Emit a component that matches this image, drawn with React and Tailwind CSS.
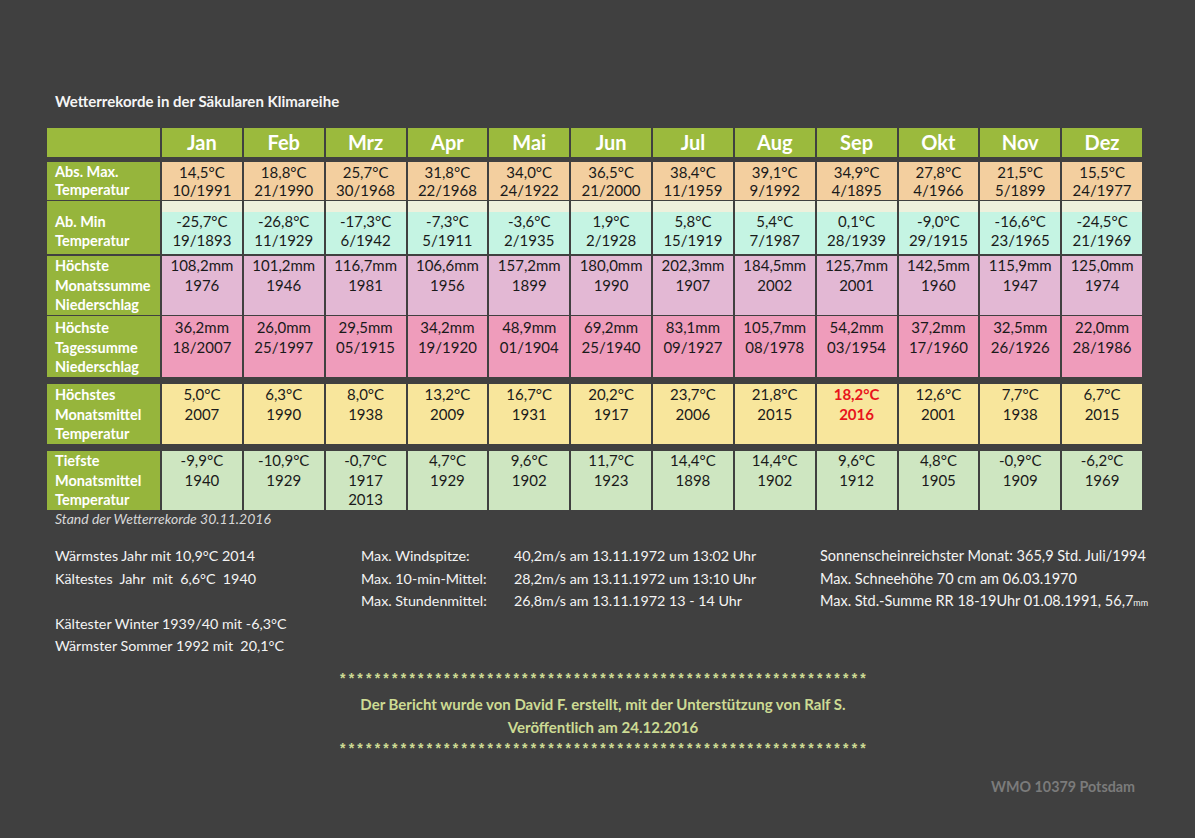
import React from 'react'

const months = ['Jan', 'Feb', 'Mrz', 'Apr', 'Mai', 'Jun', 'Jul', 'Aug', 'Sep', 'Okt', 'Nov', 'Dez']

// Zeilen der Rekordtabelle
const rows = [
  {
    label: ['Abs. Max.', 'Temperatur'],
    bg: 'bg-[#f3cf9f]',
    cls: 'mt-[5px] h-[38px]',
    lead: 'leading-[18px] pt-[1px]',
    cells: [
      ['14,5°C', '10/1991'], ['18,8°C', '21/1990'], ['25,7°C', '30/1968'], ['31,8°C', '22/1968'],
      ['34,0°C', '24/1922'], ['36,5°C', '21/2000'], ['38,4°C', '11/1959'], ['39,1°C', '9/1992'],
      ['34,9°C', '4/1895'], ['27,8°C', '4/1966'], ['21,5°C', '5/1899'], ['15,5°C', '24/1977'],
    ],
  },
  {
    label: ['Ab. Min', 'Temperatur'],
    bg: 'bg-[#c5f4e3]',
    stripe: true,
    cls: 'mt-[1px] h-[53px]',
    lead: 'leading-[19px]',
    cells: [
      ['-25,7°C', '19/1893'], ['-26,8°C', '11/1929'], ['-17,3°C', '6/1942'], ['-7,3°C', '5/1911'],
      ['-3,6°C', '2/1935'], ['1,9°C', '2/1928'], ['5,8°C', '15/1919'], ['5,4°C', '7/1987'],
      ['0,1°C', '28/1939'], ['-9,0°C', '29/1915'], ['-16,6°C', '23/1965'], ['-24,5°C', '21/1969'],
    ],
  },
  {
    label: ['Höchste', 'Monatssumme', 'Niederschlag'],
    bg: 'bg-[#e3b8d4]',
    cls: 'mt-[2px] h-[57px]',
    lead: 'leading-[19.5px]',
    cells: [
      ['108,2mm', '1976'], ['101,2mm', '1946'], ['116,7mm', '1981'], ['106,6mm', '1956'],
      ['157,2mm', '1899'], ['180,0mm', '1990'], ['202,3mm', '1907'], ['184,5mm', '2002'],
      ['125,7mm', '2001'], ['142,5mm', '1960'], ['115,9mm', '1947'], ['125,0mm', '1974'],
    ],
  },
  {
    label: ['Höchste', 'Tagessumme', 'Niederschlag'],
    bg: 'bg-[#ef9cbb]',
    cls: 'mt-[3px] h-[59px]',
    lead: 'leading-[19.5px] pt-[2px]',
    cells: [
      ['36,2mm', '18/2007'], ['26,0mm', '25/1997'], ['29,5mm', '05/1915'], ['34,2mm', '19/1920'],
      ['48,9mm', '01/1904'], ['69,2mm', '25/1940'], ['83,1mm', '09/1927'], ['105,7mm', '08/1978'],
      ['54,2mm', '03/1954'], ['37,2mm', '17/1960'], ['32,5mm', '26/1926'], ['22,0mm', '28/1986'],
    ],
  },
  {
    label: ['Höchstes', 'Monatsmittel', 'Temperatur'],
    bg: 'bg-[#f8e69c]',
    cls: 'mt-[9px] h-[59px]',
    lead: 'leading-[19.5px] pt-[1px]',
    cells: [
      ['5,0°C', '2007'], ['6,3°C', '1990'], ['8,0°C', '1938'], ['13,2°C', '2009'],
      ['16,7°C', '1931'], ['20,2°C', '1917'], ['23,7°C', '2006'], ['21,8°C', '2015'],
      ['18,2°C', '2016'], ['12,6°C', '2001'], ['7,7°C', '1938'], ['6,7°C', '2015'],
    ],
    red: 8,
  },
  {
    label: ['Tiefste', 'Monatsmittel', 'Temperatur'],
    bg: 'bg-[#cee6c1]',
    cls: 'mt-[8px] h-[58px]',
    lead: 'leading-[19.5px]',
    cells: [
      ['-9,9°C', '1940'], ['-10,9°C', '1929'], ['-0,7°C', '1917', '2013'], ['4,7°C', '1929'],
      ['9,6°C', '1902'], ['11,7°C', '1923'], ['14,4°C', '1898'], ['14,4°C', '1902'],
      ['9,6°C', '1912'], ['4,8°C', '1905'], ['-0,9°C', '1909'], ['-6,2°C', '1969'],
    ],
  },
]

const gridCols = 'grid grid-cols-[113px_repeat(12,minmax(0,1fr))] gap-x-[2px]'

function DataRow({ row }) {
  return (
    <div className={`${gridCols} ${row.cls}`}>
      <div
        className={`bg-[#96b53c] pl-[8px] text-[14.5px] font-bold text-white ${row.lead} ${
          row.stripe ? 'pt-[11px]' : ''
        }`}
      >
        {row.label.map((l) => (
          <div key={l}>{l}</div>
        ))}
      </div>
      {row.cells.map((c, i) => (
        <div key={i} className={`flex flex-col ${row.bg}`}>
          {row.stripe && <div className="h-[11px] shrink-0 bg-[#eef0dc]" />}
          <div
            className={`text-center text-[15px] ${row.lead} ${
              row.red === i ? 'font-bold text-[#e8141b]' : 'text-[#1a1a1a]'
            }`}
          >
            {c.map((t, k) => (
              <div key={k}>{t}</div>
            ))}
          </div>
        </div>
      ))}
    </div>
  )
}

function Stars() {
  return (
    <div className="flex justify-between font-['Liberation_Sans',sans-serif] text-[14px] font-bold">
      {Array.from({ length: 61 }).map((_, i) => (
        <span key={i}>*</span>
      ))}
    </div>
  )
}

export default function App() {
  return (
    <div className="w-[1195px] h-[838px] overflow-hidden bg-[#404040] text-white font-['Lato','Open_Sans',sans-serif]">
      <div className="pt-[92px] pl-[55px] text-[15px] font-bold leading-[18px] text-[#f5f5f5]">
        Wetterrekorde in der Säkularen Klimareihe
      </div>

      <div className="ml-[47px] mt-[18px] w-[1095px]">
        <div className={`${gridCols} h-[29px]`}>
          <div className="bg-[#9bba3d]" />
          {months.map((m) => (
            <div
              key={m}
              className="bg-[#9bba3d] text-center text-[20px] font-bold leading-[29px] text-white"
            >
              {m}
            </div>
          ))}
        </div>
        {rows.map((r) => (
          <DataRow key={r.label.join(' ')} row={r} />
        ))}
      </div>

      <div className="pl-[55px] mt-[2px] text-[14px] italic leading-[16px] text-[#d8d8d8]">
        Stand der Wetterrekorde 30.11.2016
      </div>

      <div className="mt-[18px] flex text-[14.3px] leading-[22.5px] text-[#f4f4f4]">
        <div className="w-[361px] pl-[55px] shrink-0">
          <div>Wärmstes Jahr mit 10,9°C 2014</div>
          <div>Kältestes&nbsp; Jahr&nbsp; mit&nbsp; 6,6°C&nbsp; 1940</div>
          <div>&nbsp;</div>
          <div>Kältester Winter 1939/40 mit -6,3°C</div>
          <div>Wärmster Sommer 1992 mit&nbsp; 20,1°C</div>
        </div>
        <div className="w-[459px] shrink-0">
          <div className="flex">
            <div className="w-[153px] shrink-0">Max. Windspitze:</div>
            <div>40,2m/s am 13.11.1972 um 13:02 Uhr</div>
          </div>
          <div className="flex">
            <div className="w-[153px] shrink-0">Max. 10-min-Mittel:</div>
            <div>28,2m/s am 13.11.1972 um 13:10 Uhr</div>
          </div>
          <div className="flex">
            <div className="w-[153px] shrink-0">Max. Stundenmittel:</div>
            <div>26,8m/s am 13.11.1972 13 - 14 Uhr</div>
          </div>
        </div>
        <div className="text-[14.5px]">
          <div>Sonnenscheinreichster Monat: 365,9 Std. Juli/1994</div>
          <div>Max. Schneehöhe 70 cm am 06.03.1970</div>
          <div>
            Max. Std.-Summe RR 18-19Uhr 01.08.1991, 56,7<span className="text-[9px]">mm</span>
          </div>
        </div>
      </div>

      <div className="ml-[340px] mt-[10px] w-[526px] text-center text-[15px] font-bold text-[#cddb94]">
        <div className="h-[20px] leading-[20px]">
          <Stars />
        </div>
        <div className="mt-[5px] leading-[23px]">
          Der Bericht wurde von David F. erstellt, mit der Unterstützung von Ralf S.
        </div>
        <div className="leading-[23px]">Veröffentlich am 24.12.2016</div>
        <div className="h-[16px] leading-[18px]">
          <Stars />
        </div>
      </div>

      <div className="mt-[23px] pl-[991px] text-[14.3px] font-bold leading-[17px] text-[#7b7b7b]">
        WMO 10379 Potsdam
      </div>
    </div>
  )
}
